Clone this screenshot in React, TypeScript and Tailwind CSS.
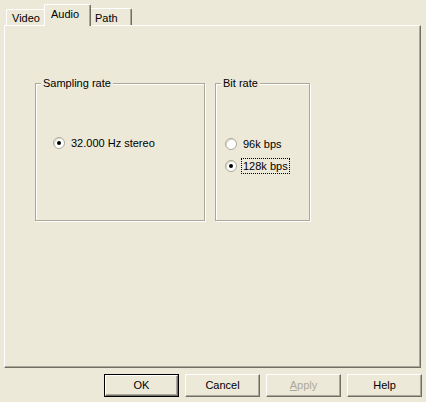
import { ReactNode } from "react";

const font = { fontFamily: '"Liberation Sans", Arial, sans-serif' };

type RadioProps = { label: string; checked?: boolean; focused?: boolean };

const Radio = ({ label, checked, focused }: RadioProps) => (
	<div className="flex items-center h-[16px]">
		<span className="relative w-[12px] h-[12px] rounded-full bg-white border border-[#aca899] shadow-[inset_1px_1px_0_#dcd9c8] flex items-center justify-center">
			{checked && <span className="w-[4px] h-[4px] rounded-full bg-black" />}
		</span>
		<span
			className={`ml-[5px] px-[1px] leading-[14px] ${focused ? "outline outline-1 outline-dotted outline-black" : ""}`}
		>
			{label}
		</span>
	</div>
);

type GroupProps = { title: string; className: string; children: ReactNode };

const GroupBox = ({ title, className, children }: GroupProps) => (
	<div className={`relative border border-[#aca899] shadow-[inset_1px_1px_0_#fff,1px_1px_0_#fff] ${className}`}>
		<span className="absolute -top-[8px] left-[5px] px-[2px] bg-[#ece9d8] leading-[14px]">{title}</span>
		{children}
	</div>
);

const Button = ({ label, isDefault, disabled }: { label: string; isDefault?: boolean; disabled?: boolean }) => (
	<div
		className={`w-[75px] h-[23px] ${isDefault ? "border border-black" : ""} flex`}
	>
		<div className="flex-1 flex items-center justify-center border-l border-t border-white border-r border-b border-r-[#716f64] border-b-[#716f64] shadow-[inset_-1px_-1px_0_#aca899]">
			{disabled ? (
				<span className="text-[#aca899]">
					<span className="underline">A</span>pply
				</span>
			) : (
				<span>{label}</span>
			)}
		</div>
	</div>
);

export default function App() {
	return (
		<div className="w-[426px] h-[402px] bg-[#ece9d8] text-[11px] text-black select-none" style={font}>
			{/* Tabs */}
			<div className="h-[25px] flex items-end pl-[6px]">
				<div className="w-[38px] h-[16px] border-l border-t border-white rounded-tl-[2px] pl-[5px] pt-[1px] leading-[14px]">
					Video
				</div>
				<div className="relative z-10 w-[47px] h-[22px] -mb-[1px] bg-[#ece9d8] border-l border-t border-white border-r border-r-[#716f64] shadow-[inset_-1px_0_0_#aca899] rounded-t-[2px] pl-[6px] pt-[2px] leading-[14px]">
					Audio
				</div>
				<div className="w-[41px] h-[17px] border-t border-white border-r border-r-[#716f64] shadow-[inset_-1px_0_0_#aca899] rounded-tr-[2px] pl-[4px] pt-[2px] leading-[14px]">
					Path
				</div>
			</div>

			{/* Panel */}
			<div className="ml-[4px] w-[417px] h-[343px] border-l border-t border-white border-r border-b border-r-[#716f64] border-b-[#716f64] shadow-[inset_-1px_-1px_0_#aca899] pt-[57px] pl-[30px] flex gap-[10px]">
				<GroupBox title="Sampling rate" className="w-[170px] h-[138px] pt-[51px] pl-[17px]">
					<Radio label="32.000 Hz stereo" checked />
				</GroupBox>
				<GroupBox title="Bit rate" className="w-[95px] h-[138px] pt-[52px] pl-[9px]">
					<div className="flex flex-col gap-[6px]">
						<Radio label="96k bps" />
						<Radio label="128k bps" checked focused />
					</div>
				</GroupBox>
			</div>

			{/* Buttons */}
			<div className="flex justify-end gap-[6px] pr-[4px] mt-[6px]">
				<Button label="OK" isDefault />
				<Button label="Cancel" />
				<Button label="Apply" disabled />
				<Button label="Help" />
			</div>
		</div>
	);
}
